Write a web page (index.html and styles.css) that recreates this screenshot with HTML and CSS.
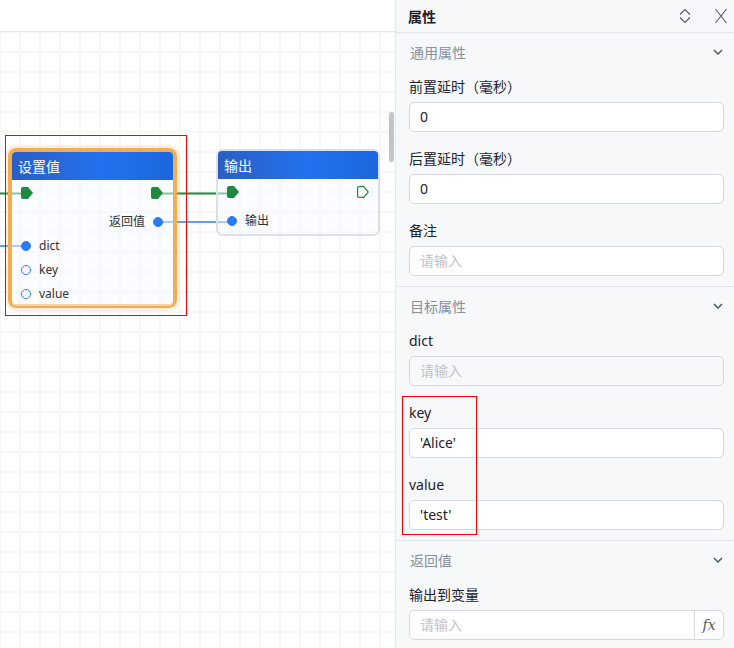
FILE: index.html
```html
<!DOCTYPE html>
<html lang="zh-CN">
<head>
<meta charset="utf-8">
<title>属性</title>
<link rel="stylesheet" href="styles.css">
</head>
<body>
<div class="app">
  <section class="canvas">
    <div class="toolbar"></div>
    <div class="board"></div>
    <svg class="edges" width="395" height="648" viewBox="0 0 395 648">
      <path d="M0 193.5 H28" class="edge-flow"/>
      <path d="M157 193.5 H233" class="edge-flow"/>
      <path d="M0 246 H26" class="edge-data"/>
      <path d="M158 222 H232" class="edge-data"/>
    </svg>

    <div class="node node-set selected">
      <div class="node-head">设置值</div>
      <div class="node-body">
        <div class="row-flow">
          <svg class="port-flow" width="12" height="12" viewBox="0 0 12 12"><path d="M0 2 Q0 0 2 0 H7 L12 6 L7 12 H2 Q0 12 0 10 Z" class="flow-fill"/></svg>
          <svg class="port-flow" width="12" height="12" viewBox="0 0 12 12"><path d="M0 2 Q0 0 2 0 H7 L12 6 L7 12 H2 Q0 12 0 10 Z" class="flow-fill"/></svg>
        </div>
        <div class="row-out"><span class="port-label">返回值</span><span class="dot filled"></span></div>
        <div class="row-in"><span class="dot filled"></span><span class="port-label">dict</span></div>
        <div class="row-in"><span class="dot"></span><span class="port-label">key</span></div>
        <div class="row-in"><span class="dot"></span><span class="port-label">value</span></div>
      </div>
    </div>

    <div class="node node-out">
      <div class="node-head">输出</div>
      <div class="node-body">
        <div class="row-flow">
          <svg class="port-flow" width="12" height="12" viewBox="0 0 12 12"><path d="M0 2 Q0 0 2 0 H7 L12 6 L7 12 H2 Q0 12 0 10 Z" class="flow-fill"/></svg>
          <svg class="port-flow" width="12" height="12" viewBox="0 0 12 12"><path d="M0.6 2 Q0.6 0.6 2 0.6 H6.8 L11.2 6 L6.8 11.4 H2 Q0.6 11.4 0.6 10 Z" class="flow-hollow"/></svg>
        </div>
        <div class="row-in"><span class="dot filled"></span><span class="port-label">输出</span></div>
      </div>
    </div>

    <div class="scrollbar"></div>
  </section>

  <aside class="panel">
    <header class="panel-head">
      <span class="panel-title">属性</span>
      <div class="panel-tools">
        <svg width="14" height="16" viewBox="0 0 14 16" class="tool-icon"><path d="M2 6.5 L7 1.5 L12 6.5 M2 9.5 L7 14.5 L12 9.5"/></svg>
        <svg width="14" height="16" viewBox="0 0 14 16" class="tool-icon"><path d="M1.5 1 L12.5 15 M12.5 1 L1.5 15"/></svg>
      </div>
    </header>

    <div class="section">
      <div class="section-head"><span>通用属性</span><svg class="chev" width="10" height="6" viewBox="0 0 10 6"><path d="M1 1 L5 5 L9 1"/></svg></div>
      <div class="section-body">
        <div class="field"><div class="label">前置延时（毫秒）</div><div class="input">0</div></div>
        <div class="field"><div class="label">后置延时（毫秒）</div><div class="input">0</div></div>
        <div class="field"><div class="label">备注</div><div class="input placeholder">请输入</div></div>
      </div>
    </div>

    <div class="section">
      <div class="section-head"><span>目标属性</span><svg class="chev" width="10" height="6" viewBox="0 0 10 6"><path d="M1 1 L5 5 L9 1"/></svg></div>
      <div class="section-body">
        <div class="field"><div class="label">dict</div><div class="input placeholder disabled">请输入</div></div>
        <div class="field"><div class="label">key</div><div class="input">'Alice'</div></div>
        <div class="field"><div class="label">value</div><div class="input">'test'</div></div>
      </div>
    </div>

    <div class="section last">
      <div class="section-head"><span>返回值</span><svg class="chev" width="10" height="6" viewBox="0 0 10 6"><path d="M1 1 L5 5 L9 1"/></svg></div>
      <div class="section-body">
        <div class="field"><div class="label">输出到变量</div>
          <div class="input-group"><div class="input placeholder grow">请输入</div><div class="addon">fx</div></div>
        </div>
      </div>
    </div>
  </aside>
</div>
<div class="annot annot-node"></div>
<div class="annot annot-fields"></div>
</body>
</html>
```
FILE: styles.css
```css
html, body {
  margin: 0;
  padding: 0;
}
body {
  width: 734px;
  height: 648px;
  overflow: hidden;
  font-family: "Noto Sans", "Noto Sans CJK SC", sans-serif;
  font-size: 14px;
  color: #1d2129;
  background: #ffffff;
  position: relative;
}
.app {
  display: flex;
  height: 648px;
}

/* ---------- canvas ---------- */
.canvas {
  position: relative;
  width: 395px;
  flex: none;
  display: flex;
  flex-direction: column;
  background: #fff;
}
.toolbar {
  height: 31px;
  border-bottom: 1px solid #e6e6e6;
  background: #fff;
}
.board {
  flex: 1;
  background-color: #fff;
  background-image:
    linear-gradient(to right, #f7f7f7 2px, transparent 2px),
    linear-gradient(to bottom, #f7f7f7 2px, transparent 2px);
  background-size: 20px 20px;
  background-position: -1px -1px;
}
.edges {
  position: absolute;
  left: 0;
  top: 0;
  z-index: 1;
}
.edge-flow {
  stroke: #1f8a3f;
  stroke-width: 2;
  fill: none;
}
.edge-data {
  stroke: #5f9ef6;
  stroke-width: 2;
  fill: none;
}
.scrollbar {
  position: absolute;
  left: 389px;
  top: 112px;
  width: 5px;
  height: 50px;
  border-radius: 3px;
  background: #c4c4c4;
  z-index: 3;
}

/* ---------- nodes ---------- */
.node {
  position: absolute;
  z-index: 2;
  box-sizing: border-box;
  display: flex;
  flex-direction: column;
  font-size: 12px;
  color: #333;
}
.node-set {
  left: 8px;
  top: 148px;
  width: 169px;
  height: 160px;
  border: 4px solid #f2ad52;
  border-radius: 8px;
  box-shadow: 0 0 0 3px rgba(245, 173, 82, 0.18);
}
.node-out {
  left: 216px;
  top: 149px;
  width: 164px;
  height: 87px;
  border: 2px solid #dcdfe6;
  border-radius: 7px;
}
.node-head {
  height: 28px;
  flex: none;
  display: flex;
  align-items: center;
  padding-left: 6px;
  color: #fff;
  font-size: 14px;
  background: linear-gradient(90deg, #2b5ec3 0%, #2271ee 55%, #1c67df 100%);
  border-radius: 4px 4px 0 0;
}
.node-body {
  flex: 1;
  background: rgba(248, 250, 255, 0.5);
  border-radius: 0 0 4px 4px;
}
.row-flow {
  height: 26px;
  display: flex;
  align-items: center;
  justify-content: space-between;
  padding: 0 9px 0 9px;
}
.node-set .row-flow {
  padding: 0 10px 0 9px;
}
.port-flow {
  display: block;
}
.flow-fill {
  fill: #1f8a3f;
}
.flow-hollow {
  fill: #fff;
  stroke: #1f8a3f;
  stroke-width: 1.2;
}
.row-out {
  height: 24px;
  margin-top: 4px;
  display: flex;
  align-items: center;
  justify-content: flex-end;
  gap: 8px;
  padding-right: 10px;
}
.row-in {
  height: 24px;
  display: flex;
  align-items: center;
  gap: 8px;
  padding-left: 9px;
}
.node-out .row-in {
  margin-top: 4px;
}
.port-label {
  line-height: 16px;
  color: #303133;
}
.dot {
  width: 10px;
  height: 10px;
  box-sizing: border-box;
  border-radius: 50%;
  border: 1.5px solid #2a7cf6;
  background: #fff;
  flex: none;
}
.dot.filled {
  background: #2a7cf6;
}

/* ---------- panel ---------- */
.panel {
  flex: 1;
  background: #f7f8fa;
  border-left: 1px solid #e5e6eb;
  display: flex;
  flex-direction: column;
  overflow: hidden;
}
.panel-head {
  height: 32px;
  flex: none;
  border-bottom: 1px solid #e5e6eb;
  display: flex;
  align-items: center;
  justify-content: space-between;
  padding: 0 6px 0 12px;
}
.panel-title {
  font-weight: 700;
  font-size: 14px;
  color: #1d2129;
}
.panel-tools {
  display: flex;
  gap: 22px;
  align-items: center;
}
.tool-icon {
  display: block;
  fill: none;
  stroke: #4e5969;
  stroke-width: 1.1;
}
.section {
  border-bottom: 1px solid #e5e6eb;
}
.section.last {
  border-bottom: none;
}
.section-head {
  height: 40px;
  box-sizing: border-box;
  padding: 0 11px 2px 14px;
  display: flex;
  align-items: center;
  justify-content: space-between;
  color: #86909c;
  font-size: 14px;
}
.chev {
  display: block;
  fill: none;
  stroke: #4e5969;
  stroke-width: 1.5;
}
.section-body {
  padding: 3px 10px 10px 13px;
}
.field + .field {
  margin-top: 16px;
}
.label {
  line-height: 22px;
  margin-bottom: 4px;
  font-size: 14px;
  color: #1d2129;
}
.input {
  height: 30px;
  box-sizing: border-box;
  border: 1px solid #d5d8df;
  border-radius: 5px;
  background: #fff;
  padding: 0 10px;
  line-height: 28px;
  font-size: 14px;
  color: #1d2129;
}
.input.placeholder {
  color: #bfc3cb;
}
.input.disabled {
  background: #f7f8fa;
}
.input-group {
  display: flex;
  height: 30px;
  box-sizing: border-box;
  border: 1px solid #d5d8df;
  border-radius: 5px;
  background: #fff;
}
.input-group .input {
  border: none;
  border-radius: 5px 0 0 5px;
  height: 28px;
  line-height: 28px;
}
.grow {
  flex: 1;
}
.addon {
  width: 28px;
  border-left: 1px solid #d5d8df;
  display: flex;
  align-items: center;
  justify-content: center;
  font-family: "DejaVu Serif", serif;
  font-style: italic;
  font-size: 14px;
  color: #4e5969;
}

/* ---------- annotations ---------- */
.annot {
  position: absolute;
  box-sizing: border-box;
  border: 1px solid #ff0000;
  z-index: 10;
  pointer-events: none;
}
.annot-node {
  left: 5px;
  top: 135px;
  width: 182px;
  height: 181px;
}
.annot-fields {
  left: 402px;
  top: 396px;
  width: 75px;
  height: 139px;
}
```
